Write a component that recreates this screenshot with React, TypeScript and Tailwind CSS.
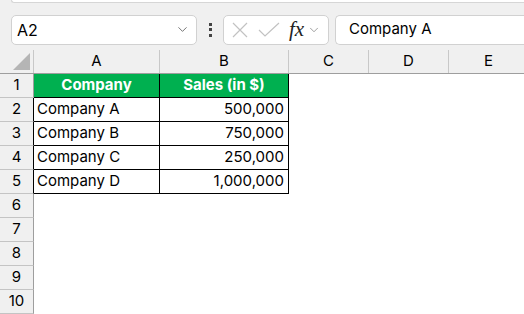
import { ChevronDown } from 'lucide-react'

const FONT = { fontFamily: 'Inter, "Liberation Sans", sans-serif' }

// column widths include the 1px right border
const COLS = [
  { key: 'A', w: 'w-[126px]' },
  { key: 'B', w: 'w-[129px]' },
  { key: 'C', w: 'w-[80px]' },
  { key: 'D', w: 'w-[80px]' },
  { key: 'E', w: 'w-[80px]' },
]

const DATA = [
  ['Company A', '500,000'],
  ['Company B', '750,000'],
  ['Company C', '250,000'],
  ['Company D', '1,000,000'],
]

function FormulaBar() {
  return (
    <div className="flex items-center h-[47px] pt-[6px] pl-[11px]">
      {/* name box */}
      <div className="w-[186px] h-[30px] bg-white border border-[#d1d1d1] rounded-[5px] flex items-center pl-[5px] pr-[6px]">
        <span className="text-[16px] text-black flex-1 leading-none">A2</span>
        <ChevronDown size={15} strokeWidth={1.3} className="text-[#555]" />
      </div>
      {/* kebab */}
      <div className="w-[26px] flex flex-col items-center gap-[2.5px]">
        <span className="w-[3px] h-[3px] bg-[#444]" />
        <span className="w-[3px] h-[3px] bg-[#444]" />
        <span className="w-[3px] h-[3px] bg-[#444]" />
      </div>
      {/* cancel / enter / fx */}
      <div className="w-[106px] h-[30px] bg-white border border-[#d1d1d1] rounded-[5px] flex items-center">
        <svg width="16" height="16" viewBox="0 0 16 16" className="ml-[8px]" fill="none" stroke="#c2c2c2" strokeWidth="1.2">
          <path d="M1 1l14 14M15 1L1 15" />
        </svg>
        <svg width="22" height="16" viewBox="0 0 22 16" className="ml-[10px]" fill="none" stroke="#c2c2c2" strokeWidth="1.2">
          <path d="M1 8l6 6L21 1" />
        </svg>
        <span
          className="ml-[9px] text-[21px] italic text-[#222] leading-none"
          style={{ fontFamily: '"Liberation Serif", serif' }}
        >
          fx
        </span>
        <ChevronDown size={14} strokeWidth={1.2} className="ml-[3px] text-[#777]" />
      </div>
      {/* formula input */}
      <div className="ml-[6px] flex-1 h-[30px] bg-white border border-r-0 border-[#d1d1d1] rounded-l-[5px] flex items-center pl-[13px]">
        <span className="text-[15px] text-black">Company A</span>
      </div>
    </div>
  )
}

function HeaderRow() {
  return (
    <div className="flex h-[24px] border-b border-[#9e9e9e]">
      <div className="w-[34px] shrink-0 border-r border-[#c8c8c8] relative">
        <div
          className="absolute right-[3px] bottom-[3px] w-[17px] h-[17px] bg-[#b5b5b5]"
          style={{ clipPath: 'polygon(100% 0, 100% 100%, 0 100%)' }}
        />
      </div>
      {COLS.map(c => (
        <div
          key={c.key}
          className={`${c.w} shrink-0 border-r border-[#c8c8c8] flex items-center justify-center text-[15px] text-black`}
        >
          {c.key}
        </div>
      ))}
      <div className="flex-1" />
    </div>
  )
}

function Row({ n, edge, children }: { n: number; edge?: boolean; children?: React.ReactNode }) {
  return (
    <div className="flex h-[24px]">
      <div
        className={`w-[34px] shrink-0 border-r border-b border-[#c4c4c4] ${edge ? 'border-r-black' : 'border-r-[#9e9e9e]'} flex items-center justify-center text-[15px] text-black`}
      >
        {n}
      </div>
      <div className="flex-1 bg-white flex">{children}</div>
    </div>
  )
}

export default function App() {
  return (
    <div className="w-[524px] h-[314px] overflow-hidden bg-[#f0f0f0] select-none" style={FONT}>
      <div className="ml-[11px] h-[3px] bg-white border-b border-l border-[#d6d6d6] rounded-bl-[4px]" />
      <FormulaBar />
      <HeaderRow />

      <Row n={1}>
        <div className="w-[126px] h-[24px] bg-[#00b050] border-r border-b border-black flex items-center justify-center text-[15px] font-bold text-white">
          Company
        </div>
        <div className="w-[129px] h-[24px] bg-[#00b050] border-r border-b border-black flex items-center justify-center text-[15px] font-bold text-white">
          Sales (in $)
        </div>
      </Row>
      {DATA.map(([name, sales], i) => (
        <Row key={name} n={i + 2} edge>
          <div className="w-[126px] h-[24px] border-r border-b border-black flex items-center pl-[3px] text-[15px] text-black">
            {name}
          </div>
          <div className="w-[129px] h-[24px] border-r border-b border-black flex items-center justify-end pr-[4px] text-[15px] text-black">
            {sales}
          </div>
        </Row>
      ))}
      {[6, 7, 8, 9, 10].map(n => (
        <Row key={n} n={n} />
      ))}
    </div>
  )
}
